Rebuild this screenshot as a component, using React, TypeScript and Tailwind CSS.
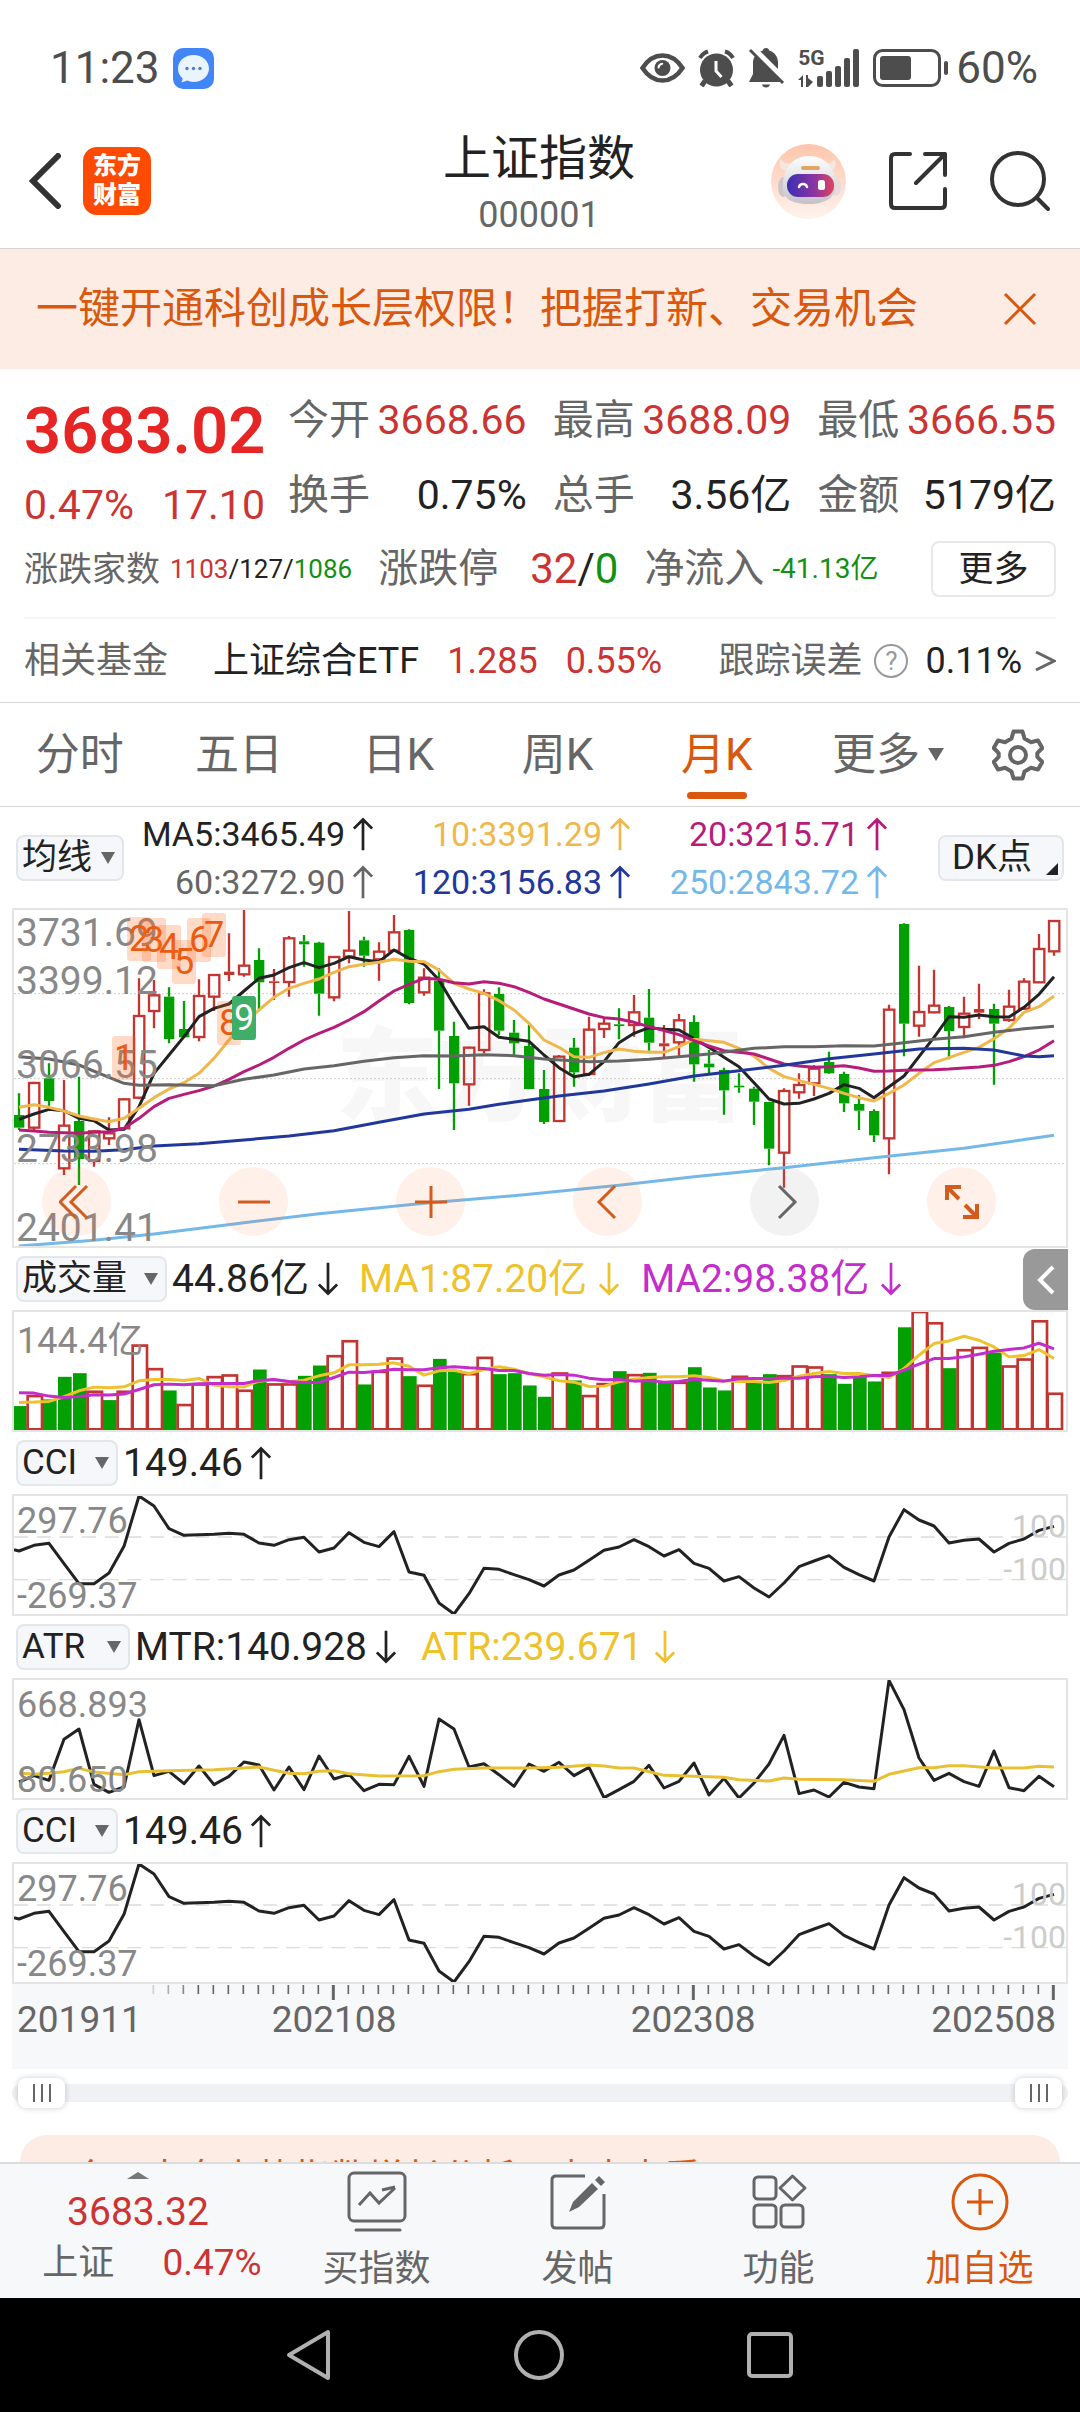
import { useState } from "react";
import type { ReactNode } from "react";

const RED = "#c23531";
const GREEN = "#03a003";

// colour, high, body top, body bottom, low (three units to a pixel)
type Candle = [string, number, number, number, number];

const candles: Candle[] = [
  ["g", 880, 945, 983, 990], ["r", 845, 849, 983, 990], ["g", 790, 835, 903, 918], ["r", 840, 977, 1105, 1125],
  ["g", 830, 963, 1077, 1155], ["r", 990, 994, 1083, 1100], ["r", 952, 1000, 1015, 1035], ["r", 895, 898, 985, 986],
  ["r", 535, 648, 893, 898], ["r", 540, 586, 633, 685], ["g", 562, 590, 717, 730], ["g", 603, 687, 712, 714],
  ["r", 538, 588, 711, 724], ["r", 523, 525, 590, 633], ["r", 400, 515, 525, 543], ["r", 327, 497, 523, 530],
  ["g", 445, 480, 547, 633], ["r", 507, 544, 549, 600], ["r", 408, 415, 546, 590], ["g", 405, 424, 433, 500],
  ["g", 425, 428, 581, 647], ["r", 468, 471, 592, 604], ["r", 333, 452, 470, 490], ["g", 410, 421, 467, 500],
  ["r", 427, 455, 478, 542], ["r", 345, 397, 452, 455], ["g", 388, 390, 609, 613], ["r", 505, 533, 577, 587],
  ["g", 505, 542, 692, 867], ["g", 665, 708, 850, 990], ["r", 740, 743, 853, 917], ["r", 568, 580, 750, 760],
  ["g", 562, 582, 692, 705], ["g", 660, 698, 730, 765], ["g", 675, 738, 867, 868], ["g", 810, 867, 966, 972],
  ["r", 765, 770, 963, 966], ["g", 714, 743, 817, 860], ["r", 650, 689, 822, 828], ["r", 655, 671, 687, 714],
  ["g", 625, 673, 678, 718], ["r", 585, 637, 675, 710], ["g", 567, 653, 728, 752], ["r", 675, 730, 739, 772],
  ["r", 642, 661, 727, 768], ["g", 646, 666, 793, 845], ["g", 750, 791, 802, 820], ["g", 803, 810, 871, 944],
  ["g", 820, 857, 862, 878], ["g", 860, 866, 905, 975], ["g", 905, 906, 1046, 1096], ["r", 865, 873, 1058, 1163],
  ["r", 820, 855, 877, 896], ["r", 795, 806, 850, 888], ["g", 755, 786, 820, 822], ["g", 815, 822, 910, 936],
  ["g", 885, 912, 932, 990], ["g", 928, 933, 1006, 1026], ["r", 614, 629, 1015, 1123], ["g", 370, 372, 671, 769],
  ["r", 497, 636, 677, 710], ["r", 509, 617, 637, 640], ["g", 618, 621, 693, 778], ["r", 590, 641, 681, 715],
  ["r", 551, 627, 638, 657], ["g", 611, 627, 671, 854], ["r", 569, 620, 660, 665], ["r", 535, 545, 626, 630],
  ["r", 402, 447, 547, 548], ["r", 361, 363, 454, 467],
];

const ma5 = [
  958, 942, 928, 932, 955, 962, 990, 988, 920, 820, 765, 710, 650, 625, 612, 573, 535, 525, 503, 488, 503, 490, 470,
  480, 485, 450, 475, 492, 540, 615, 685, 680, 712, 718, 724, 765, 803, 830, 823, 785, 728, 700, 683, 688, 690, 716,
  742, 772, 800, 848, 897, 912, 910, 897, 880, 854, 865, 893, 860, 828, 770, 712, 650, 652, 645, 650, 651, 622, 583,
  530,
];
const ma10 = [
  922, 914, 922, 933, 948, 957, 965, 955, 925, 893, 867, 848, 820, 775, 720, 670, 630, 592, 565, 550, 537, 517, 500,
  493, 487, 478, 484, 485, 510, 550, 567, 580, 602, 630, 670, 720, 742, 770, 772, 758, 747, 754, 757, 757, 740, 718,
  722, 727, 745, 768, 805, 830, 842, 853, 865, 880, 893, 903, 880, 855, 820, 788, 773, 757, 742, 716, 685, 637, 620,
  588,
];
const ma20 = [
  990, 993, 997, 998, 1000, 997, 995, 985, 955, 920, 895, 883, 872, 858, 838, 815, 795, 772, 745, 720, 700, 682, 660,
  635, 603, 573, 553, 535, 538, 548, 552, 545, 550, 560, 577, 597, 612, 627, 642, 653, 657, 667, 680, 692, 704, 722,
  738, 752, 757, 762, 777, 792, 798, 802, 800, 797, 804, 814, 813, 811, 810, 809, 807, 804, 801, 796, 785, 770, 750,
  722,
];

// sparse lines: [month index, y]
const ma60 = [
  [0, 770], [2, 777], [4, 795], [6, 832], [7, 850], [8, 856], [10, 854], [13, 857], [15, 838], [17, 825], [19, 807],
  [21, 797], [23, 784], [25, 773], [27, 767], [29, 768], [31, 764], [33, 767], [35, 777], [38, 785], [40, 783],
  [42, 778], [44, 770], [46, 762], [49, 745], [51, 740], [53, 740], [55, 737], [57, 738], [59, 728], [61, 718],
  [63, 710], [65, 697], [67, 686], [69, 679],
];
const ma120 = [
  [0, 1048], [3, 1053], [5, 1054], [7, 1049], [9, 1038], [12, 1031], [15, 1020], [18, 1008], [21, 992], [24, 967],
  [27, 942], [30, 928], [32, 913], [34, 900], [36, 888], [39, 873], [42, 852], [45, 828], [48, 812], [51, 796],
  [54, 776], [57, 762], [60, 747], [63, 745], [65, 750], [67, 768], [68, 770], [69, 767],
];
const ma250 = [
  [0, 1338], [5, 1321], [9, 1302], [15, 1268], [20, 1241], [27, 1210], [34, 1183], [40, 1156], [45, 1130], [51, 1103],
  [57, 1073], [63, 1045], [69, 1006],
];

const volumes = [
  498, 468, 478, 410, 399, 455, 480, 455, 316, 387, 451, 495, 433, 411, 406, 452, 388, 433, 433, 407, 376, 348, 303,
  433, 395, 355, 408, 437, 356, 390, 402, 353, 402, 399, 436, 470, 400, 421, 468, 432, 393, 405, 398, 428, 428, 381,
  442, 451, 410, 425, 402, 408, 379, 382, 402, 431, 410, 424, 398, 261, 215, 249, 384, 330, 323, 337, 379, 358, 243,
  461,
];
const volumeColors = "grgggrgrrrgrrrrrgrrggrrgrrgrggrrggggrgrrgrggrgggrggrrrggggrgrrgrrgrrrr";
const volMa1 = [
  487, 486, 484, 470, 452, 441, 443, 440, 422, 418, 418, 421, 415, 435, 440, 440, 423, 419, 425, 420, 407, 398, 374,
  374, 372, 368, 378, 405, 392, 390, 400, 388, 380, 387, 400, 410, 422, 426, 439, 438, 425, 417, 412, 410, 410, 407,
  412, 422, 424, 424, 427, 421, 408, 400, 394, 400, 400, 406, 412, 385, 345, 310, 302, 288, 300, 320, 350, 346, 328,
  355,
];
const volMa2 = [
  458, 459, 468, 472, 469, 464, 465, 462, 448, 434, 432, 434, 431, 430, 430, 430, 421, 418, 424, 427, 427, 412, 396,
  397, 393, 387, 389, 389, 383, 380, 383, 385, 391, 391, 400, 405, 403, 405, 414, 419, 418, 423, 421, 426, 424, 417,
  420, 423, 416, 415, 415, 414, 414, 410, 408, 412, 410, 406, 406, 390, 372, 355, 355, 350, 342, 333, 328, 323, 309,
  326,
];

const cci = [
  932, 915, 909, 970, 1030, 1030, 998, 918, 767, 797, 865, 885, 883, 882, 879, 882, 908, 915, 898, 891, 935, 923, 877,
  906, 919, 874, 995, 1005, 1088, 1121, 1060, 984, 987, 1003, 1018, 1037, 1004, 989, 960, 930, 920, 898, 919, 947,
  928, 969, 984, 1022, 1009, 1043, 1070, 1028, 979, 962, 946, 981, 1003, 1022, 890, 808, 839, 857, 908, 900, 896, 935,
  909, 896, 870, 858,
];
const mtr = [
  485, 466, 480, 357, 326, 492, 516, 500, 298, 466, 453, 490, 437, 493, 468, 425, 434, 509, 440, 508, 407, 476, 462,
  511, 492, 493, 408, 498, 296, 326, 440, 430, 463, 498, 431, 453, 426, 466, 441, 532, 508, 483, 435, 503, 483, 428,
  524, 474, 533, 488, 431, 345, 520, 509, 530, 486, 500, 505, 180, 268, 413, 480, 459, 484, 498, 392, 502, 511, 468,
  499,
];
const atr = [
  [0, 458], [1, 462], [2, 459], [3, 454], [4, 444], [5, 455], [7, 463], [8, 454], [10, 451], [13, 448], [16, 440],
  [17, 450], [18, 459], [19, 460], [20, 453], [21, 451], [22, 460], [24, 467], [27, 466], [28, 454], [29, 447],
  [31, 443], [34, 443], [36, 441], [38, 434], [39, 437], [40, 443], [41, 443], [43, 465], [45, 468], [47, 471],
  [48, 478], [50, 482], [51, 473], [52, 477], [55, 478], [57, 483], [58, 462], [60, 442], [61, 442], [62, 436],
  [63, 436], [65, 443], [67, 443], [68, 438], [69, 440],
];

const quotes = [
  { label: "今开", value: "3668.66", up: true },
  { label: "最高", value: "3688.09", up: true },
  { label: "最低", value: "3666.55", up: true },
  { label: "换手", value: "0.75%", up: false },
  { label: "总手", value: "3.56亿", up: false },
  { label: "金额", value: "5179亿", up: false },
];

const tabs = ["分时", "五日", "日K", "周K", "月K"];

const averages = [
  { text: "MA5:3465.49", color: "text-[#222222]" },
  { text: "10:3391.29", color: "text-[#f0b84c]" },
  { text: "20:3215.71", color: "text-[#b81c7a]" },
  { text: "60:3272.90", color: "text-[#666666]" },
  { text: "120:3156.83", color: "text-[#21379c]" },
  { text: "250:2843.72", color: "text-[#74b8ea]" },
];

const priceLabels = [
  { value: "3731.69", place: "top-[5px]" },
  { value: "3399.12", place: "top-[53px]" },
  { value: "3066.55", place: "top-[137px]" },
  { value: "2733.98", place: "top-[221px]" },
  { value: "2401.41", place: "top-[300px]" },
];

const marks = [
  { n: 1, x: 98, y: 126 },
  { n: 2, x: 113, y: 7 },
  { n: 3, x: 128, y: 8 },
  { n: 4, x: 143, y: 15 },
  { n: 5, x: 158, y: 30 },
  { n: 6, x: 173, y: 8 },
  { n: 7, x: 188, y: 3 },
  { n: 8, x: 203, y: 91 },
  { n: 9, x: 218, y: 86 },
];

const px = (i: number) => 15 + i * 45;
const dense = (ys: number[]) => ys.map((y, i) => `${px(i)},${y}`).join(" ");
const sparse = (points: number[][]) => points.map(([i, y]) => `${px(i)},${y}`).join(" ");

function Line({ points, color }: { points: string; color: string }) {
  return <polyline points={points} fill="none" stroke={color} strokeWidth="9" strokeLinejoin="round" />;
}

function Arrow({ down = false }: { down?: boolean }) {
  return (
    <svg viewBox="0 0 22 36" className="h-[34px] w-[20px] shrink-0" fill="none" stroke="currentColor" strokeWidth="3">
      {down ? <path d="M11 0V34M1 24L11 34L21 24" /> : <path d="M11 36V2M1 12L11 2L21 12" />}
    </svg>
  );
}

function Picker({ label, options, width }: { label: string; options: string[]; width: string }) {
  return (
    <label className={`relative block h-[46px] shrink-0 ${width}`}>
      <select
        aria-label={label}
        className="h-full w-full appearance-none rounded-lg border-2 border-[#e3e6eb] bg-[#f6f7fa] pl-[4px] text-[35px] leading-[42px] text-[#222222]"
      >
        {options.map((option) => (
          <option key={option}>{option}</option>
        ))}
      </select>
      <svg viewBox="0 0 14 12" className="pointer-events-none absolute top-[17px] right-[9px] h-[12px] w-[14px]">
        <path d="M0 0H14L7 12Z" fill="#666" />
      </svg>
    </label>
  );
}

function Pane({ picker, header, children }: { picker: ReactNode; header: ReactNode; children: ReactNode }) {
  return (
    <section>
      <div className="relative flex h-[62px] items-center gap-[5px] pl-[4px] text-[39px] leading-none whitespace-nowrap text-[#222222]">
        {picker}
        {header}
      </div>
      <div className="relative h-[122px] overflow-hidden border-2 border-[#e4e4e4]">{children}</div>
    </section>
  );
}

function PaneLabel({ place, children }: { place: string; children: ReactNode }) {
  return <span className={`absolute left-[3px] text-[36px] leading-[36px] text-[#888888] ${place}`}>{children}</span>;
}

function CciPane() {
  return (
    <Pane
      picker={<Picker label="副图指标" options={["CCI", "ATR"]} width="w-[102px]" />}
      header={
        <span className="flex items-center gap-[8px]">
          149.46 <Arrow />
        </span>
      }
    >
      <svg viewBox="0 767 3156 354" preserveAspectRatio="none" className="block h-full w-full">
        <g stroke="#dcdcdc" strokeWidth="4" strokeDasharray="42 26">
          <path d="M0 890H3156" />
          <path d="M0 1018H3156" />
        </g>
        <Line points={`0,928 ${dense(cci)}`} color="#222222" />
      </svg>
      <PaneLabel place="top-[7px]">297.76</PaneLabel>
      <PaneLabel place="top-[82px]">-269.37</PaneLabel>
      <span className="absolute top-[14px] right-0 text-[32px] leading-[32px] text-[#cccccc]">100</span>
      <span className="absolute top-[57px] right-0 text-[32px] leading-[32px] text-[#cccccc]">-100</span>
    </Pane>
  );
}

function StatusBar() {
  return (
    <div className="flex h-[114px] items-center justify-between pt-[22px] pr-[42px] pl-[50px] text-[44px] leading-none text-[#4d4d4d]">
      <div className="flex items-center gap-[13px]">
        <span>11:23</span>
        <svg viewBox="0 0 41 41" className="h-[41px] w-[41px]">
          <rect width="41" height="41" rx="10" fill="#4285f7" />
          <path
            d="M20.500 7C12 7 5 12.800 5 20.500c0 4.600 2 7.500 4.500 9.700.2 1.800-.4 3-1.300 4 2.300 0 4.400-.8 5.800-1.600 2 .9 4.200 1.400 6.500 1.400C29 34 36 28.200 36 20.500S29 7 20.500 7Z"
            fill="#e9f4ff"
          />
          <g fill="#4d7fd0">
            <circle cx="14" cy="20.500" r="1.700" />
            <circle cx="20.500" cy="20.500" r="1.700" />
            <circle cx="27" cy="20.500" r="1.700" />
          </g>
        </svg>
      </div>
      <div className="flex items-center gap-[13px]">
        <svg viewBox="0 0 45 30" className="h-[30px] w-[45px]" fill="none">
          <path d="M2.500 15C8 6.500 14.500 2.500 22.500 2.500S37 6.500 42.500 15C37 23.500 30.500 27.500 22.500 27.500S8 23.500 2.500 15Z" stroke="#4d4d4d" strokeWidth="4.500" />
          <circle cx="22.500" cy="15" r="8" fill="#4d4d4d" />
          <path d="M18.500 14.500c.3-2 1.500-3.300 3.700-3.700" stroke="#fff" strokeWidth="2" strokeLinecap="round" />
        </svg>
        <svg viewBox="0 0 37 38" className="h-[38px] w-[37px]" fill="none" stroke="#4d4d4d">
          <circle cx="18.500" cy="21" r="16.500" fill="#4d4d4d" stroke="none" />
          <path d="M2 9C4 5.500 6.500 3.500 10 2.500M35 9C33 5.500 30.500 3.500 27 2.500" strokeWidth="4" />
          <path d="M7 32L3.500 37M30 32L33.500 37" strokeWidth="5" />
          <path d="M18 12V22L23.500 28" stroke="#fff" strokeWidth="3" />
        </svg>
        <svg viewBox="0 0 37 40" className="h-[40px] w-[37px]">
          <path d="M18 0c1.800 0 3 1 3.200 2.600C26.500 4 30 9 30 14.500V24l4 10H1l4-8V14.500C5 9 9.500 4 14.800 2.600 15 1 16.200 0 18 0Z" fill="#4d4d4d" />
          <path d="M14 36.500h8c-.5 2-2 3-4 3s-3.500-1-4-3Z" fill="#4d4d4d" />
          <path d="M4 0L38 34" stroke="#fff" strokeWidth="7" />
          <path d="M2 2L35 35" stroke="#4d4d4d" strokeWidth="3" />
        </svg>
        <div className="relative">
          <svg viewBox="0 0 62 38" className="h-[38px] w-[62px]" fill="#4d4d4d">
            <rect x="19" y="27" width="6" height="11" rx="2" />
            <rect x="28" y="22" width="6" height="16" rx="2" />
            <rect x="37" y="17" width="6" height="21" rx="2" />
            <rect x="46" y="9" width="6" height="29" rx="2" />
            <rect x="55" y="0" width="6" height="38" rx="2" />
            <path d="M5 26v12H3v-7H0ZM8 26h2v3l5 4-5 5H8Z" />
          </svg>
          <span className="absolute -top-px left-0 text-[21px] leading-[21px] font-bold">5G</span>
        </div>
        <div className="flex items-center gap-[7px]">
          <svg viewBox="0 0 76 38" className="h-[38px] w-[76px]">
            <rect x="1.500" y="1.500" width="65" height="35" rx="8" fill="none" stroke="#4d4d4d" strokeWidth="3" />
            <rect x="7" y="7" width="31" height="24" rx="3" fill="#4d4d4d" />
            <rect x="71" y="12" width="4" height="14" rx="2" fill="#4d4d4d" />
          </svg>
          <span>60%</span>
        </div>
      </div>
    </div>
  );
}

function Robot() {
  return (
    <svg viewBox="0 0 75 75" className="h-[75px] w-[75px]">
      <defs>
        <linearGradient id="peach" x1="0" y1="0" x2="0" y2="1">
          <stop offset="0" stopColor="#fdc5ab" />
          <stop offset="1" stopColor="#fff3ee" />
        </linearGradient>
        <linearGradient id="visor" x1="0" y1="0" x2="1" y2="0">
          <stop offset="0" stopColor="#3a2fb4" />
          <stop offset="0.600" stopColor="#8d35a0" />
          <stop offset="1" stopColor="#e0455c" />
        </linearGradient>
        <linearGradient id="shell" x1="0" y1="0" x2="0" y2="1">
          <stop offset="0" stopColor="#ffffff" />
          <stop offset="1" stopColor="#c4c1c8" />
        </linearGradient>
      </defs>
      <circle cx="37.500" cy="37.500" r="37.500" fill="url(#peach)" />
      <path d="M10 15c-3 5-1 10 5 12l8-8c-6 1-11 1-13-4ZM63 15c3 5 2 10-3 12l-8-8c5 1 9 1 11-4Z" fill="#f5e6e2" />
      <ellipse cx="12" cy="43" rx="5" ry="10" fill="#cdc7cc" />
      <ellipse cx="65" cy="43" rx="5" ry="9" fill="#e6dcdd" />
      <path d="M38 12c17 0 26 13 27 27 1 13-9 21-27 21S10 54 12 40c1-15 9-28 26-28Z" fill="url(#shell)" />
      <rect x="30" y="22" width="19" height="4" rx="2" fill="#e0a467" />
      <rect x="16" y="30" width="47" height="23" rx="11" fill="url(#visor)" />
      <path d="M28 43c1-4 7-4 8 0" fill="none" stroke="#fff" strokeWidth="2.500" strokeLinecap="round" />
      <rect x="47" y="36" width="7" height="10" rx="2.500" fill="#fff" />
    </svg>
  );
}

function Header() {
  return (
    <header className="grid h-[135px] grid-cols-[1fr_auto_1fr] items-center border-b border-[#d5d5d5] pr-[30px] pl-[28px]">
      <div className="flex items-center gap-[21px]">
        <button type="button" aria-label="返回">
          <svg viewBox="0 0 34 56" className="h-[56px] w-[34px]" fill="none" stroke="#333" strokeWidth="6">
            <path d="M30 3L5 28L30 53" strokeLinecap="round" />
          </svg>
        </button>
        <a href="#home" className="flex h-[68px] w-[68px] flex-col items-center justify-center rounded-[14px] bg-[#ff4a03] text-[24px] leading-[29px] font-black text-white">
          <span>东方</span>
          <span>财富</span>
        </a>
      </div>
      <div className="pt-[10px] text-center">
        <h1 className="text-[48px] leading-[58px] text-[#222222]">上证指数</h1>
        <p className="text-[36px] leading-[54px] text-[#666666]">000001</p>
      </div>
      <div className="flex items-center justify-end gap-[43px]">
        <button type="button" aria-label="智能助手">
          <Robot />
        </button>
        <button type="button" aria-label="分享">
          <svg viewBox="0 0 58 58" className="h-[58px] w-[58px]" fill="none" stroke="#333" strokeWidth="4" strokeLinecap="round" strokeLinejoin="round">
            <path d="M21 2H6Q2 2 2 6V52Q2 56 6 56H52Q56 56 56 52V37" />
            <path d="M36 2H56V23M56 2L27 31" />
          </svg>
        </button>
        <button type="button" aria-label="搜索">
          <svg viewBox="0 0 60 60" className="h-[60px] w-[60px]" fill="none" stroke="#333" strokeWidth="4" strokeLinecap="round">
            <circle cx="28" cy="28" r="26" />
            <path d="M47 47L58 58" />
          </svg>
        </button>
      </div>
    </header>
  );
}

function Quote() {
  return (
    <section className="border-b border-[#d5d5d5] px-[24px] pt-[14px] leading-none whitespace-nowrap">
      <div className="flex">
        <div className="w-[264px] shrink-0 pt-[10px] text-[#e62525]">
          <p className="flex h-[76px] items-center text-[65px] font-semibold">3683.02</p>
          <p className="flex h-[72px] items-center gap-[28px] text-[41px] text-[#cc3333]">
            <span>0.47%</span>
            <span>17.10</span>
          </p>
        </div>
        <dl className="grid flex-1 grid-cols-3 grid-rows-[75px_75px] gap-x-[26px] text-[41px]">
          {quotes.map((item) => (
            <div key={item.label} className="flex items-center justify-between">
              <dt className="text-[#666666]">{item.label}</dt>
              <dd className={item.up ? "text-[#cc3333]" : "text-[#222222]"}>{item.value}</dd>
            </div>
          ))}
        </dl>
      </div>

      <div className="flex h-[56px] items-center gap-[26px] text-[#666666]">
        <div className="flex items-center gap-[10px]">
          <span className="text-[34px]">涨跌家数</span>
          <span className="text-[26px] text-[#222222]">
            <span className="text-[#cc3333]">1103</span>/127/<span className="text-[#149014]">1086</span>
          </span>
        </div>
        <div className="flex items-center gap-[32px] text-[40px]">
          <span>涨跌停</span>
          <span className="text-[42px] text-[#222222]">
            <span className="text-[#cc3333]">32</span>/<span className="text-[#149014]">0</span>
          </span>
        </div>
        <div className="flex items-center gap-[8px] text-[40px]">
          <span>净流入</span>
          <span className="text-[28px] text-[#149014]">-41.13亿</span>
        </div>
        <button type="button" className="ml-auto h-[56px] w-[125px] rounded-lg border-2 border-[#e8e8e8] text-[35px] text-[#222222]">
          更多
        </button>
      </div>

      <div className="mt-[20px] flex h-[85px] items-center border-t-2 border-[#f5f5f5] text-[36px] text-[#222222]">
        <span className="text-[#666666]">相关基金</span>
        <a href="#etf" className="ml-[45px] flex gap-[28px]">
          <span>上证综合ETF</span>
          <span className="text-[#cc3333]">1.285</span>
          <span className="text-[#cc3333]">0.55%</span>
        </a>
        <a href="#tracking" className="ml-auto flex items-center gap-[12px]">
          <span className="text-[#666666]">跟踪误差</span>
          <span className="flex h-[34px] w-[34px] items-center justify-center rounded-full border-2 border-[#999999] text-[26px] text-[#999999]">
            ?
          </span>
          <span className="ml-[5px]">0.11%</span>
          <svg viewBox="0 0 22 22" className="h-[22px] w-[22px]" fill="none" stroke="#666" strokeWidth="3">
            <path d="M2 2L20 11L2 20" />
          </svg>
        </a>
      </div>
    </section>
  );
}

function Tabs() {
  const [active, setActive] = useState("月K");

  return (
    <nav className="grid h-[104px] grid-cols-[repeat(6,159fr)_124fr] border-b border-[#d5d5d5] text-[44px] leading-none text-[#666666]">
      {tabs.map((tab) => (
        <button
          key={tab}
          type="button"
          onClick={() => setActive(tab)}
          className={`relative ${tab === active ? "text-[#d9580d]" : ""}`}
        >
          {tab}
          {tab === active && (
            <span className="absolute bottom-[7px] left-1/2 h-[7px] w-[60px] -translate-x-1/2 rounded-full bg-[#d9580d]" />
          )}
        </button>
      ))}
      <button type="button" aria-haspopup="menu" className="flex items-center justify-center gap-[8px] pl-[24px]">
        更多
        <svg viewBox="0 0 16 13" className="h-[13px] w-[16px]">
          <path d="M0 0H16L8 13Z" fill="#666" />
        </svg>
      </button>
      <button type="button" aria-label="设置" className="flex items-center justify-center">
        <svg viewBox="0 0 52 52" className="h-[52px] w-[52px]" fill="none" stroke="#666" strokeWidth="4" strokeLinejoin="round">
          <path d="M21.500 2.500h9l2 7 6.500 3.700 7-1.800 4.300 7.600-5 5.200v3.600l5 5.200-4.300 7.600-7-1.800-6.500 3.700-2 7h-9l-2-7-6.500-3.700-7 1.800L1.700 33l5-5.200v-3.600l-5-5.200L6 11.400l7 1.800 6.500-3.700Z" />
          <circle cx="26" cy="26" r="8" />
        </svg>
      </button>
    </nav>
  );
}

function Candles() {
  return (
    <g strokeWidth="7">
      {candles.map(([kind, high, top, bottom, low], i) => {
        const x = px(i);
        const color = kind === "r" ? RED : GREEN;
        const hollow = kind === "r" && bottom - top > 12;
        return (
          <g key={i} stroke={color}>
            <path d={`M${x} ${high}V${top}M${x} ${bottom}V${low}`} />
            {hollow ? (
              <rect x={x - 15} y={top} width="31" height={bottom - top} fill="none" />
            ) : (
              <rect x={x - 15} y={top} width="31" height={bottom - top} fill={color} stroke="none" />
            )}
          </g>
        );
      })}
    </g>
  );
}

function RoundButton({ label, muted = false, children }: { label: string; muted?: boolean; children: ReactNode }) {
  return (
    <button
      type="button"
      aria-label={label}
      className={`flex h-[69px] w-[69px] items-center justify-center rounded-full ${muted ? "bg-[#808080]/10" : "bg-[#ff6a20]/10"}`}
    >
      <svg viewBox="0 0 36 36" className="h-[36px] w-[36px]" fill="none" stroke={muted ? "#666" : "#d25c1e"} strokeWidth="3">
        {children}
      </svg>
    </button>
  );
}

function PriceChart() {
  return (
    <section>
      <div className="flex h-[101px] items-center pr-[4px] pl-[4px] leading-none whitespace-nowrap">
        <Picker label="主图指标" options={["均线", "BOLL"]} width="w-[108px]" />
        <ul className="mr-auto grid w-[763px] grid-cols-[249px_257px_257px] text-[34px] leading-[48px]">
          {averages.map((item) => (
            <li key={item.text} className={`flex items-center justify-end gap-[8px] ${item.color}`}>
              {item.text}
              <Arrow />
            </li>
          ))}
        </ul>
        <button
          type="button"
          aria-haspopup="menu"
          className="relative h-[46px] w-[126px] rounded-lg border-2 border-[#e3e6eb] bg-[#f6f7fa] pr-[18px] text-[35px] leading-[40px] text-[#222222]"
        >
          DK点
          <svg viewBox="0 0 12 12" className="absolute right-[4px] bottom-[4px] h-[12px] w-[12px]">
            <path d="M12 0V12H0Z" fill="#222" />
          </svg>
        </button>
      </div>

      <div className="relative h-[340px] overflow-hidden border-2 border-[#e4e4e4]">
        <span className="absolute top-[110px] left-1/2 -translate-x-1/2 text-[102px] leading-[116px] font-black whitespace-nowrap text-[#f7f7f7]">
          东方财富
        </span>
        <svg viewBox="0 330 3156 1008" preserveAspectRatio="none" className="relative block h-full w-full">
          <g stroke="#cccccc" strokeWidth="3" strokeDasharray="6 6">
            <path d="M0 581H3156" />
            <path d="M0 836H3156" />
            <path d="M0 1091H3156" />
          </g>
          <Candles />
          <Line points={dense(ma5)} color="#222222" />
          <Line points={dense(ma10)} color="#f0b84c" />
          <Line points={dense(ma20)} color="#b81c7a" />
          <Line points={sparse(ma60)} color="#666666" />
          <Line points={sparse(ma120)} color="#21379c" />
          <Line points={sparse(ma250)} color="#74b8ea" />
        </svg>
        {priceLabels.map((item) => (
          <span key={item.value} className={`absolute left-[2px] text-[39px] leading-[36px] text-[#888888] ${item.place}`}>
            {item.value}
          </span>
        ))}
        {marks.map((mark) => (
          <span
            key={mark.n}
            className={`absolute h-[44px] w-[24px] rounded-[3px] text-center text-[36px] leading-[44px] ${
              mark.n === 9 ? "bg-[#3fae66] text-white" : "bg-[#ff6a20]/25 text-[#ea5b10]"
            }`}
            style={{ left: mark.x, top: mark.y }}
          >
            {mark.n}
          </span>
        ))}
        <div className="absolute right-[70px] bottom-[10px] left-[28px] flex justify-between">
          <RoundButton label="最早">
            <path d="M17 2L1 18L17 34M28 2L12 18L28 34" />
          </RoundButton>
          <RoundButton label="缩小">
            <path d="M2 18H34" />
          </RoundButton>
          <RoundButton label="放大">
            <path d="M2 18H34M18 2V34" />
          </RoundButton>
          <RoundButton label="向左">
            <path d="M25 2L9 18L25 34" />
          </RoundButton>
          <RoundButton label="向右" muted>
            <path d="M12 2L28 18L12 34" />
          </RoundButton>
          <RoundButton label="全屏">
            <path d="M3 16V3H17M3 3L15 15M33 20V33H19M33 33L21 21" strokeWidth="4" />
          </RoundButton>
        </div>
      </div>
    </section>
  );
}

function VolumePane() {
  return (
    <Pane
      picker={<Picker label="成交指标" options={["成交量", "成交额"]} width="w-[151px]" />}
      header={
        <>
          <span className="flex items-center gap-[9px]">
            44.86亿 <Arrow down />
          </span>
          <span className="ml-[16px] flex items-center gap-[12px] text-[#edc22c]">
            MA1:87.20亿 <Arrow down />
          </span>
          <span className="ml-[17px] flex items-center gap-[12px] text-[#c42ccb]">
            MA2:98.38亿 <Arrow down />
          </span>
          <button
            type="button"
            aria-label="展开侧栏"
            className="absolute top-px right-0 flex h-[61px] w-[45px] items-center justify-center rounded-l-xl bg-[#999999]"
          >
            <svg viewBox="0 0 18 30" className="h-[30px] w-[18px]" fill="none" stroke="#fff" strokeWidth="4">
              <path d="M16 2L3 15L16 28" />
            </svg>
          </button>
        </>
      }
    >
      <svg viewBox="0 215 3156 355" preserveAspectRatio="none" className="block h-full w-full">
        {volumes.map((top, i) =>
          volumeColors[i] === "r" ? (
            <rect key={i} x={px(i) - 19} y={top} width="43" height={568 - top} fill="#fff" stroke={RED} strokeWidth="8" />
          ) : (
            <rect key={i} x={px(i) - 18} y={top} width="41" height={570 - top} fill={GREEN} />
          )
        )}
        <Line points={dense(volMa1)} color="#edc22c" />
        <Line points={dense(volMa2)} color="#c42ccb" />
      </svg>
      <PaneLabel place="top-[11px]">144.4亿</PaneLabel>
    </Pane>
  );
}

function AtrPane() {
  return (
    <Pane
      picker={<Picker label="副图指标" options={["ATR", "CCI"]} width="w-[114px]" />}
      header={
        <>
          <span className="flex items-center gap-[9px]">
            MTR:140.928 <Arrow down />
          </span>
          <span className="ml-[20px] flex items-center gap-[12px] text-[#edc22c]">
            ATR:239.671 <Arrow down />
          </span>
        </>
      }
    >
      <svg viewBox="0 179 3156 354" preserveAspectRatio="none" className="block h-full w-full">
        <Line points={dense(mtr)} color="#222222" />
        <Line points={sparse(atr)} color="#e8c033" />
      </svg>
      <PaneLabel place="top-[7px]">668.893</PaneLabel>
      <PaneLabel place="top-[82px]">80.650</PaneLabel>
    </Pane>
  );
}

const thumb =
  "[&::-webkit-slider-thumb]:pointer-events-auto [&::-webkit-slider-thumb]:h-[30px] [&::-webkit-slider-thumb]:w-[47px] [&::-webkit-slider-thumb]:appearance-none [&::-webkit-slider-thumb]:rounded-lg [&::-webkit-slider-thumb]:bg-white [&::-webkit-slider-thumb]:bg-[repeating-linear-gradient(90deg,#666_0_2px,transparent_2px_8px)] [&::-webkit-slider-thumb]:bg-[length:18px_18px] [&::-webkit-slider-thumb]:bg-center [&::-webkit-slider-thumb]:bg-no-repeat [&::-webkit-slider-thumb]:shadow-[0_0_6px_rgba(0,0,0,0.2)]";

function TimeAxis() {
  return (
    <section>
      <div className="h-[85px] bg-[#f7f8fa] text-[36px] leading-none text-[#666666]">
        <svg viewBox="0 0 3168 48" preserveAspectRatio="none" className="block h-[16px] w-full" stroke="#666">
          {Array.from({ length: 61 }, (_, k) => k + 9).map((i) => {
            const tall = (i - 21) % 24 === 0;
            return (
              <path
                key={i}
                d={`M${px(i) + 4} 3V${tall ? 48 : 30}`}
                strokeWidth={tall ? 9 : 5}
                opacity={i < 12 ? (i - 8) * 0.25 : 1}
              />
            );
          })}
        </svg>
        <div className="relative h-[40px] text-[37px] leading-[40px]">
          <span className="absolute left-[5px]">201911</span>
          <span className="absolute left-[30.5%] -translate-x-1/2">202108</span>
          <span className="absolute left-[64.5%] -translate-x-1/2">202308</span>
          <span className="absolute right-[12px]">202508</span>
        </div>
      </div>
      <div className="flex h-[66px] items-start pt-[9px]">
        <div className="relative h-[30px] w-full">
          <div className="absolute inset-x-0 top-[6px] h-[18px] rounded-full bg-[#f0f1f4]" />
          <div className="absolute inset-x-[6px] inset-y-0">
            <input
              type="range"
              aria-label="起始月份"
              defaultValue={0}
              className={`pointer-events-none absolute h-[30px] w-full appearance-none bg-transparent ${thumb}`}
            />
            <input
              type="range"
              aria-label="结束月份"
              defaultValue={100}
              className={`pointer-events-none absolute h-[30px] w-full appearance-none bg-transparent ${thumb}`}
            />
          </div>
        </div>
      </div>
    </section>
  );
}

function ToolButton({ label, accent = false, children }: { label: string; accent?: boolean; children: ReactNode }) {
  return (
    <button
      type="button"
      className={`flex flex-col items-center gap-[12px] pt-[7px] text-[36px] leading-[48px] ${accent ? "text-[#d9580d]" : "text-[#666666]"}`}
    >
      <svg viewBox="0 0 62 62" className="h-[62px] w-[62px]" fill="none" stroke="currentColor" strokeWidth="3">
        {children}
      </svg>
      <span>{label}</span>
    </button>
  );
}

function BottomBar() {
  return (
    <footer className="grid h-[136px] grid-cols-[276fr_201fr_201fr_201fr_201fr] border-t-2 border-[#dcdddf] bg-[#f7f8fa] leading-none">
      <button type="button" className="flex flex-col items-center pt-[8px] text-[#cc3333]">
        <svg viewBox="0 0 22 7" className="h-[7px] w-[22px]">
          <path d="M11 0L22 7H0Z" fill="#777" />
        </svg>
        <span className="text-[39px] leading-[66px]">3683.32</span>
        <span className="-mt-[6px] flex gap-[48px] pl-[28px] text-[37px] leading-[48px]">
          <span className="text-[36px] text-[#666666]">上证</span>
          <span>0.47%</span>
        </span>
      </button>
      <ToolButton label="买指数">
        <rect x="3" y="2" width="56" height="48" rx="5" />
        <path d="M10 59H54" strokeLinecap="round" />
        <path d="M13 34L24 22L33 32L49 17M36 19L49 16" />
      </ToolButton>
      <ToolButton label="发帖">
        <path d="M38 5H9Q5 5 5 9V53Q5 57 9 57H53Q57 57 57 53V23" />
        <path d="M22 41L26 31L45 12L51 18L32 36ZM48 9L52 5L58 11L54 15Z" fill="currentColor" stroke="none" />
      </ToolButton>
      <ToolButton label="功能">
        <rect x="6" y="6" width="22" height="22" rx="4" />
        <path d="M44.500 5L57 17L44.500 29L32 17Z" strokeLinejoin="round" />
        <rect x="6" y="34" width="22" height="22" rx="4" />
        <rect x="33" y="34" width="22" height="22" rx="4" />
      </ToolButton>
      <ToolButton label="加自选" accent>
        <circle cx="31" cy="31" r="27" />
        <path d="M31 18V44M18 31H44" />
      </ToolButton>
    </footer>
  );
}

function SystemNav() {
  return (
    <div className="flex h-[114px] items-center justify-between bg-black px-[286px]">
      <button type="button" aria-label="后退">
        <svg viewBox="0 0 46 52" className="h-[52px] w-[46px]" fill="none" stroke="#b0b0b0" strokeWidth="4" strokeLinejoin="round">
          <path d="M3 26L42 3V49Z" />
        </svg>
      </button>
      <button type="button" aria-label="主页">
        <svg viewBox="0 0 52 52" className="h-[52px] w-[52px]" fill="none" stroke="#b0b0b0" strokeWidth="4">
          <circle cx="26" cy="26" r="23" />
        </svg>
      </button>
      <button type="button" aria-label="最近任务">
        <svg viewBox="0 0 48 48" className="h-[48px] w-[48px]" fill="none" stroke="#b0b0b0" strokeWidth="4">
          <rect x="3" y="3" width="42" height="42" rx="3" />
        </svg>
      </button>
    </div>
  );
}

export default function App() {
  const [showNotice, setShowNotice] = useState(true);

  return (
    <main className="w-full overflow-hidden bg-white font-['Roboto','Noto_Sans_CJK_SC',sans-serif]">
      <StatusBar />
      <Header />

      {/* NOTICE */}
      {showNotice && (
        <div className="flex h-[120px] items-center justify-between bg-[#fcece3] pr-[43px] pl-[36px] text-[42px] leading-none text-[#d9580d]">
          <a href="#open">一键开通科创成长层权限！把握打新、交易机会</a>
          <button type="button" aria-label="关闭" onClick={() => setShowNotice(false)}>
            <svg viewBox="0 0 34 34" className="h-[34px] w-[34px]" fill="none" stroke="currentColor" strokeWidth="3">
              <path d="M2 2L32 32M32 2L2 32" />
            </svg>
          </button>
        </div>
      )}

      <Quote />
      <Tabs />

      {/* CHARTS */}
      <div className="px-[12px]">
        <PriceChart />
        <VolumePane />
        <CciPane />
        <AtrPane />
        <CciPane />
        <TimeAxis />
      </div>

      {/* TIP CARD */}
      <div className="mx-[20px] h-[27px] overflow-hidden rounded-t-[40px] bg-[#fcece3] pt-[18px] pl-[52px] text-[37px] leading-[52px] text-[#d9580d]">
        今日大盘走势指数增长分析，点击查看
      </div>

      <BottomBar />
      <SystemNav />
    </main>
  );
}
